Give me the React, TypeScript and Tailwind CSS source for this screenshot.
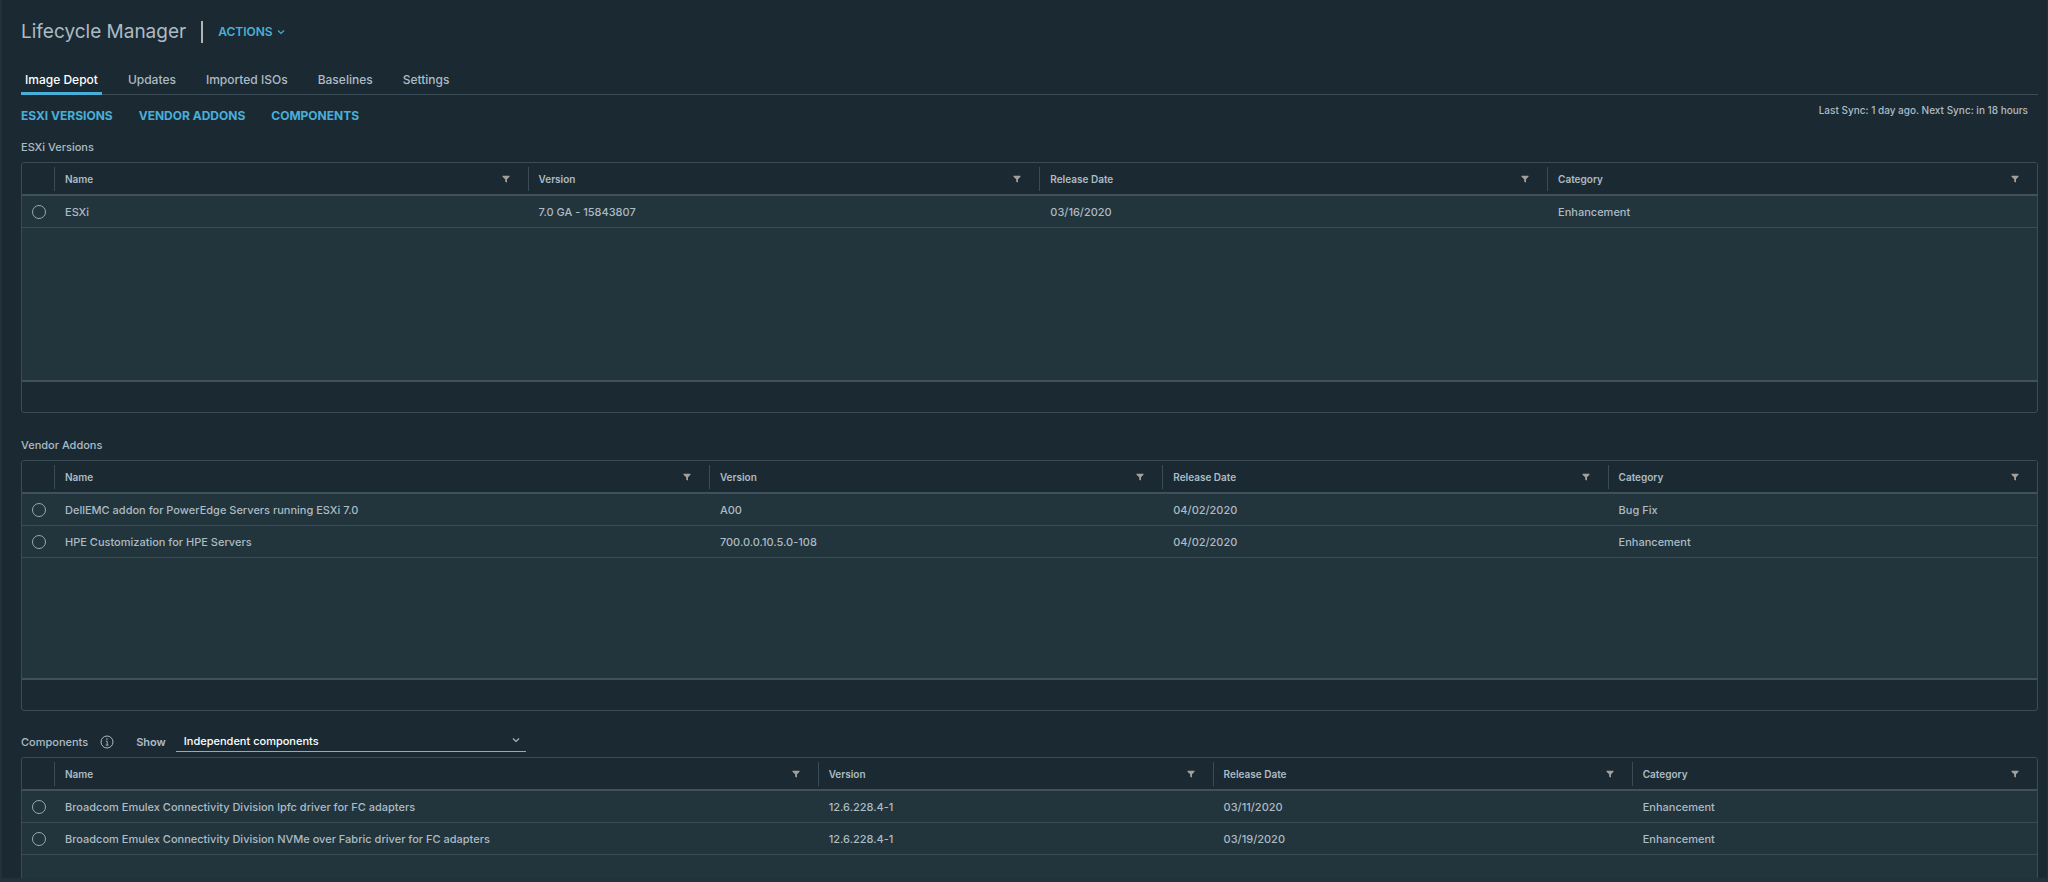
type Row = { name: string; version: string; date: string; category: string }

const tabs = ["Image Depot", "Updates", "Imported ISOs", "Baselines", "Settings"]

const anchors = [
    { label: "ESXI VERSIONS", href: "#esxi-versions" },
    { label: "VENDOR ADDONS", href: "#vendor-addons" },
    { label: "COMPONENTS", href: "#components" },
]

const esxiVersions: Row[] = [
    { name: "ESXi", version: "7.0 GA - 15843807", date: "03/16/2020", category: "Enhancement" },
]

const vendorAddons: Row[] = [
    { name: "DellEMC addon for PowerEdge Servers running ESXi 7.0", version: "A00", date: "04/02/2020", category: "Bug Fix" },
    { name: "HPE Customization for HPE Servers", version: "700.0.0.10.5.0-108", date: "04/02/2020", category: "Enhancement" },
]

const components: Row[] = [
    { name: "Broadcom Emulex Connectivity Division lpfc driver for FC adapters", version: "12.6.228.4-1", date: "03/11/2020", category: "Enhancement" },
    { name: "Broadcom Emulex Connectivity Division NVMe over Fabric driver for FC adapters", version: "12.6.228.4-1", date: "03/19/2020", category: "Enhancement" },
]

const headings = ["Name", "Version", "Release Date", "Category"]

function Chevron() {
    return (
        <svg viewBox="0 0 8 8" className="h-2 w-2" fill="none" stroke="currentColor" strokeWidth="1.1" aria-hidden="true">
            <path d="M1 2.5 4 5.5 7 2.5" />
        </svg>
    )
}

function FilterIcon() {
    return (
        <svg viewBox="0 0 8 8" className="h-2 w-2" fill="currentColor" aria-hidden="true">
            <path d="M0.5 0.8h7v1L5 4.3V7.6L3.2 6.8V4.3L0.5 1.8z" />
        </svg>
    )
}

function InfoIcon() {
    return (
        <svg viewBox="0 0 14 14" className="size-[14px]" fill="none" stroke="currentColor" aria-hidden="true">
            <circle cx="7" cy="7" r="6" strokeWidth="1" />
            <path d="M5.8 6.2H7.2V10M5.6 10.1H8.6" strokeWidth="0.9" />
            <circle cx="6.9" cy="4" r="0.8" fill="currentColor" stroke="none" />
        </svg>
    )
}

function DataGrid({ id, label, cols, rows }: { id: string; label: string; cols: string[]; rows: Row[] }) {
    return (
        <div className="flex h-[251px] shrink-0 flex-col overflow-hidden rounded-[3px] border border-[#3c4c56]">
            <div className="flex-1 bg-[#22343c]">
                <table className="w-full table-fixed border-collapse text-left" aria-label={label}>
                    <colgroup>
                        <col className="w-8" />
                        {cols.map((col, i) => (
                            <col key={i} className={col} />
                        ))}
                    </colgroup>
                    <thead className="bg-[#1b2a32]">
                        <tr className="h-8 border-b-2 border-[#40515d]">
                            <td />
                            {headings.map((heading) => (
                                <th key={heading} scope="col" className="p-0 text-[10px] leading-4 font-semibold text-[#adbbc4]">
                                    <div className="flex h-6 items-center justify-between border-l border-[#3c4c56] pr-[18px] pl-2.5">
                                        {heading}
                                        <button type="button" aria-label={`Filter ${heading}`} className="text-[#a3a09c]">
                                            <FilterIcon />
                                        </button>
                                    </div>
                                </th>
                            ))}
                        </tr>
                    </thead>
                    <tbody>
                        {rows.map((row) => (
                            <tr key={row.name} className="h-8 border-b border-[#3c4c56] text-[11px] leading-4 font-medium text-[#adbbc4]">
                                <td className="p-0 pt-0.5 pl-2.5">
                                    <input
                                        type="radio"
                                        name={id}
                                        aria-label={row.name}
                                        className="block size-[14px] appearance-none rounded-full border border-[#9aa8b0] checked:bg-[#49afd9]"
                                    />
                                </td>
                                <td className="truncate p-0 pt-0.5 pl-[11px]">{row.name}</td>
                                <td className="truncate p-0 pt-0.5 pl-[11px]">{row.version}</td>
                                <td className="truncate p-0 pt-0.5 pl-[11px]">{row.date}</td>
                                <td className="truncate p-0 pt-0.5 pl-[11px]">{row.category}</td>
                            </tr>
                        ))}
                    </tbody>
                </table>
            </div>
            <div className="h-8 shrink-0 border-t-2 border-[#40515d]" />
        </div>
    )
}

export default function App() {
    return (
        <div className="flex h-screen flex-col border-r border-b-4 border-l-2 border-[#22323b] bg-[#1b2a32] font-['Inter',sans-serif] text-[#adbbc4]">
            <main className="flex min-h-0 flex-1 flex-col overflow-hidden pr-[9px] pl-[19px]">
                <header className="flex h-16 shrink-0 items-center">
                    <h1 className="text-[19px] leading-6 font-normal">Lifecycle Manager</h1>
                    <span className="mx-[15px] h-[22px] w-[2px] bg-[#b3b3b0]" />
                    <button type="button" className="flex items-center gap-1 text-xs leading-4 font-semibold text-[#49afd9]">
                        ACTIONS
                        <Chevron />
                    </button>
                </header>

                <nav className="flex h-[31px] shrink-0 items-end gap-[22px] border-b border-[#3c4c56]">
                    {tabs.map((tab, i) => (
                        <button
                            key={tab}
                            type="button"
                            className={
                                i === 0
                                    ? "-mb-px border-b-3 border-[#49afd9] px-1 pb-1 text-xs leading-4 font-medium text-white"
                                    : "-mb-px border-b-3 border-transparent px-1 pb-1 text-xs leading-4 font-medium"
                            }
                        >
                            {tab}
                        </button>
                    ))}
                </nav>

                <div className="flex h-[42px] shrink-0 items-center justify-between">
                    <div className="flex gap-[26px]">
                        {anchors.map((a) => (
                            <a key={a.href} href={a.href} className="text-xs leading-4 font-bold text-[#49afd9]">
                                {a.label}
                            </a>
                        ))}
                    </div>
                    <p className="pr-2.5 pb-3 text-[10px] leading-4 font-medium">Last Sync: 1 day ago. Next Sync: in 18 hours</p>
                </div>

                <section id="esxi-versions" className="shrink-0">
                    <h2 className="h-[25px] pt-0.5 text-[11px] leading-4 font-medium">ESXi Versions</h2>
                    <DataGrid id="esxi" label="ESXi Versions" cols={["w-[23.5%]", "w-[25.4%]", "w-[25.2%]", ""]} rows={esxiVersions} />
                </section>

                <section id="vendor-addons" className="shrink-0">
                    <h2 className="h-[47px] pt-6 text-[11px] leading-4 font-medium">Vendor Addons</h2>
                    <DataGrid id="addon" label="Vendor Addons" cols={["w-[32.5%]", "w-[22.5%]", "w-[22.1%]", ""]} rows={vendorAddons} />
                </section>

                <section id="components" className="shrink-0">
                    <div className="flex h-[46px] items-end pb-[5px] text-[11px] leading-4 font-medium">
                        <h2 className="mb-0.5">Components</h2>
                        <button type="button" aria-label="About components" className="mb-[3px] ml-3">
                            <InfoIcon />
                        </button>
                        <label htmlFor="show" className="mb-0.5 ml-[22px] font-semibold">
                            Show
                        </label>
                        <div className="relative ml-2.5 w-[350px]">
                            <select
                                id="show"
                                defaultValue="independent"
                                className="block h-6 w-full appearance-none border-b border-[#9aa8b0] bg-transparent px-2 pt-0.5 text-white outline-none"
                            >
                                <option value="independent">Independent components</option>
                            </select>
                            <span className="pointer-events-none absolute top-2 right-1.5">
                                <Chevron />
                            </span>
                        </div>
                    </div>
                    <DataGrid id="component" label="Components" cols={["w-[37.9%]", "w-[19.6%]", "w-[20.8%]", ""]} rows={components} />
                </section>
            </main>
        </div>
    )
}
